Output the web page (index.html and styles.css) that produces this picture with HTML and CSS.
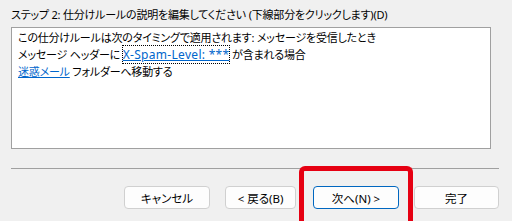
FILE: index.html
```html
<!DOCTYPE html>
<html>
  <head>
    <title>仕分けルール ウィザード</title>
    <link rel="stylesheet" href="styles.css">
  </head>

  <body>
    <div class="step-title">ステップ 2: 仕分けルールの説明を編集してください (下線部分をクリックします)(D)</div>

    <div class="rule-box">
      <div class="rule-line">この仕分けルールは次のタイミングで適用されます: メッセージを受信したとき</div>
      <div class="rule-line">メッセージ ヘッダーに <a href="#" class="rule-link focused">X-Spam-Level: ***</a> が含まれる場合</div>
      <div class="rule-line"><a href="#" class="rule-link">迷惑メール</a> フォルダーへ移動する</div>
    </div>

    <div class="separator"></div>

    <div class="buttons">
      <button type="button" class="btn btn-cancel">キャンセル</button>
      <button type="button" class="btn btn-back">&lt; 戻る(B)</button>
      <button type="button" class="btn btn-next">次へ(N) &gt;</button>
      <button type="button" class="btn btn-finish">完了</button>
    </div>

    <div class="highlight"></div>
  </body>
</html>
```

FILE: styles.css
```css
body {
  margin: 0;
  width: 512px;
  height: 221px;
  overflow: hidden;
  position: relative;
  background-color: #f0f0f0;
  color: #000;
  font-family: "Noto Sans", "Noto Sans CJK JP", sans-serif;
  font-size: 11px;
  line-height: 17px;
  letter-spacing: -0.2px;
  font-feature-settings: "palt";
}

.step-title {
  padding: 6px 0 0 11px;
  height: 21px;
  white-space: nowrap;
}

.rule-box {
  margin-left: 11px;
  width: 478px;
  height: 119px;
  padding: 1px 0 0 0;
  box-sizing: content-box;
  border: 1px solid #a0a0a0;
  background: #fff;
}

.rule-line {
  padding-left: 6px;
  white-space: nowrap;
}

.rule-link {
  color: #0066cc;
  text-decoration: underline;
}

.rule-link.focused {
  font-size: 12px;
  letter-spacing: 0.3px;
  outline: 1px dotted #000;
  outline-offset: 0;
}

.separator {
  margin: 19px 0 0 11px;
  width: 488px;
  height: 1px;
  background: #a0a0a0;
}

.buttons {
  display: flex;
  justify-content: flex-end;
  gap: 15px;
  padding-right: 13px;
  margin-top: 17px;
}

.btn {
  height: 23px;
  padding: 0;
  border: 1px solid #d0d0d0;
  border-radius: 4px;
  background: #fdfdfd;
  color: #000;
  font-family: inherit;
  font-size: 11.5px;
  font-feature-settings: "palt";
}

.btn-cancel {
  width: 86px;
}

.btn-back {
  width: 71px;
  margin-right: 2px;
}

.btn-next {
  width: 86px;
  border-color: #0067c0;
}

.btn-finish {
  width: 85px;
}

/* red annotation frame round the next button, cut by the window edge */
.highlight {
  position: absolute;
  left: 299px;
  top: 166px;
  width: 104px;
  height: 50px;
  border: 5px solid #e60012;
  border-bottom: 0;
  border-radius: 6px 6px 0 0;
}
```
